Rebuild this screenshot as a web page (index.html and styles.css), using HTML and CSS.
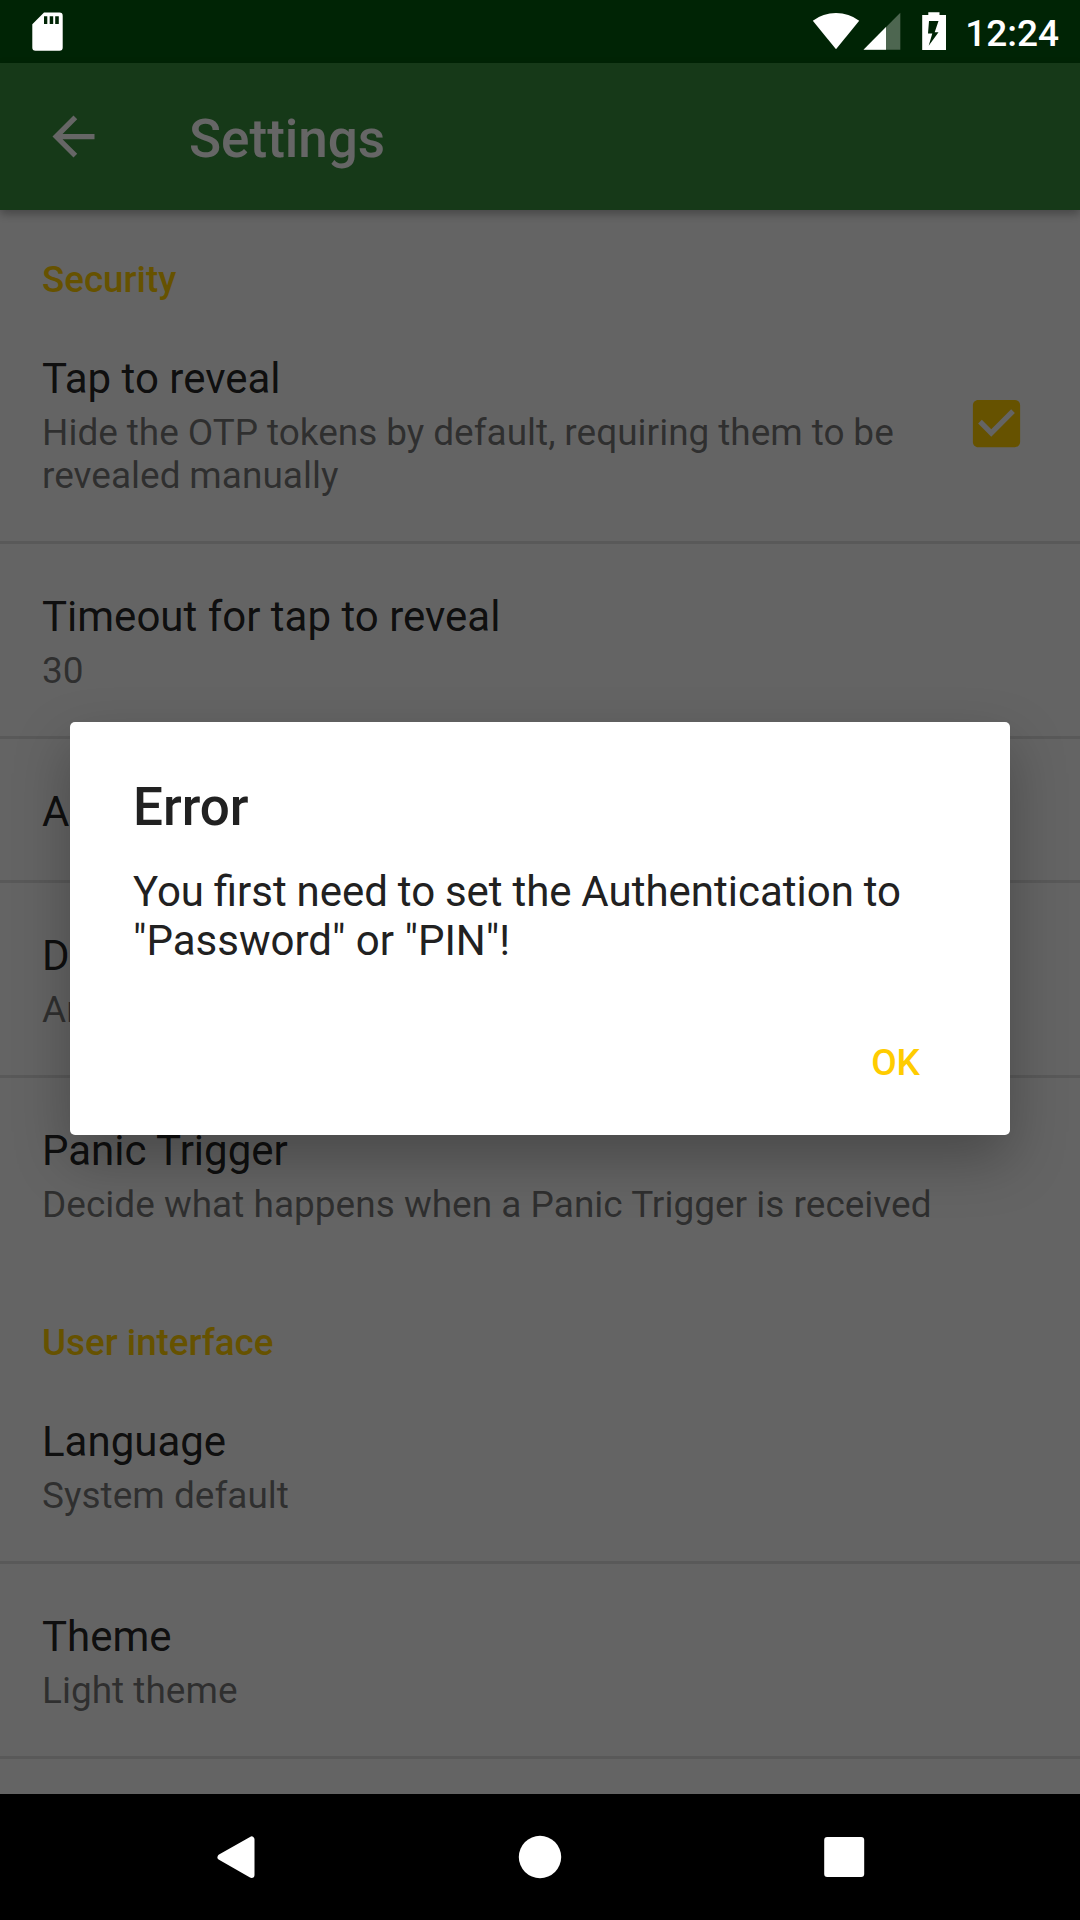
FILE: index.html
```html
<!DOCTYPE html>
<html lang="en">
<head>
<meta charset="utf-8">
<title>Settings</title>
<link rel="stylesheet" href="styles.css">
</head>
<body>
<div class="screen">
  <header class="status-bar">
    <svg class="icon-sd" width="31" height="39" viewBox="0 0 31 39"><path fill="#fff" fill-rule="evenodd" d="M12 .5H27.500Q30.700.5 30.700 3.700V35.500Q30.700 38.700 27.500 38.700H3.500Q.3 38.700.3 35.500V12.200ZM12 4.300V12H15.300V4.300ZM17.700 4.300V12H21.200V4.300ZM23.200 4.300V12H26.800V4.300Z"/></svg>
    <div class="status-right">
      <svg width="136" height="39" viewBox="812 12 136 39">
        <path fill="#fff" d="M812.800 20.700Q823 13 836 13T859.200 20.700L836 49.200Z"/>
        <path fill="#fff" fill-opacity=".3" d="M900.300 12.700V49.800H863.500Z"/>
        <path fill="#fff" d="M886 27.100V49.800H863.500Z"/>
        <path fill="#fff" fill-rule="evenodd" d="M928.300 12.300H939.500V15H946V50H922.200V15H928.300ZM929 21L928 33.500H932.300L928.700 45.700L938.500 32.300H934.700L938.500 21Z"/>
      </svg>
      <span class="clock">12:24</span>
    </div>
  </header>

  <div class="toolbar">
    <svg width="63" height="63" viewBox="0 0 24 24"><path fill="#fff" d="M20 11H7.830l5.590-5.590L12 4l-8 8 8 8 1.410-1.410L7.830 13H20v-2z"/></svg>
    <h1 class="toolbar-title">Settings</h1>
  </div>

  <main class="list">
    <h2 class="category">Security</h2>
    <div class="pref">
      <div class="pref-text">
        <div class="title">Tap to reveal</div>
        <div class="summary summary-tight">Hide the OTP tokens by default, requiring them to be revealed manually</div>
      </div>
      <svg class="checkbox" width="63" height="63" viewBox="0 0 24 24"><path fill="#fc0" d="M19 3H5c-1.110 0-2 .9-2 2v14c0 1.100.89 2 2 2h14c1.110 0 2-.9 2-2V5c0-1.100-.89-2-2-2zm-9 14l-5-5 1.410-1.410L10 14.170l7.590-7.590L19 8l-9 9z"/></svg>
    </div>
    <div class="pref">
      <div class="pref-text">
        <div class="title">Timeout for tap to reveal</div>
        <div class="summary">30</div>
      </div>
    </div>
    <div class="pref">
      <div class="pref-text"><div class="title">A</div></div>
    </div>
    <div class="pref">
      <div class="pref-text">
        <div class="title">D</div>
        <div class="summary">An</div>
      </div>
    </div>
    <div class="pref pref-last">
      <div class="pref-text">
        <div class="title">Panic Trigger</div>
        <div class="summary">Decide what happens when a Panic Trigger is received</div>
      </div>
    </div>
    <h2 class="category">User interface</h2>
    <div class="pref">
      <div class="pref-text">
        <div class="title">Language</div>
        <div class="summary">System default</div>
      </div>
    </div>
    <div class="pref">
      <div class="pref-text">
        <div class="title">Theme</div>
        <div class="summary">Light theme</div>
      </div>
    </div>
  </main>

  <nav class="nav-bar">
    <svg width="126" height="126" viewBox="0 0 126 126"><path fill="#fff" stroke="#fff" stroke-width="6" stroke-linejoin="round" d="M51.500 45.500V81L20.500 63.200Z"/></svg>
    <svg width="126" height="126" viewBox="0 0 126 126"><circle cx="63" cy="63" r="21.200" fill="#fff"/></svg>
    <svg width="126" height="126" viewBox="0 0 126 126"><rect x="76.200" y="43" width="40" height="40" rx="3" fill="#fff"/></svg>
  </nav>

  <div class="scrim">
    <section class="dialog">
      <h2 class="dialog-title">Error</h2>
      <p class="dialog-message">You first need to set the Authentication to "Password" or "PIN"!</p>
      <div class="dialog-actions"><button class="dialog-button">OK</button></div>
    </section>
  </div>
</div>
</body>
</html>
```

FILE: styles.css
```css
* {
  box-sizing: border-box;
  margin: 0;
  padding: 0;
}

body {
  font-family: Roboto, "Noto Sans", sans-serif;
  font-weight: 400;
  color: rgba(0, 0, 0, 0.87);
  background: #000;
}

svg {
  display: block;
  flex: none;
}

.screen {
  position: relative;
  display: flex;
  flex-direction: column;
  width: 1080px;
  height: 1920px;
  overflow: hidden;
}

.status-bar {
  display: flex;
  flex: none;
  justify-content: space-between;
  height: 63px;
  padding: 12px 21px 0 32px;
  background: #002405;
}

.status-right {
  display: flex;
  gap: 17px;
}

.clock {
  font-size: 37px;
  font-weight: 500;
  line-height: 43px;
  color: #fff;
}

.toolbar {
  z-index: 1;
  display: flex;
  flex: none;
  align-items: center;
  gap: 84px;
  height: 147px;
  padding-left: 42px;
  background: #388e3c;
  box-shadow: 0 4px 9px rgba(0, 0, 0, 0.3);
}

.toolbar-title {
  padding-top: 4px;
  font-size: 53px;
  font-weight: 500;
  line-height: 62px;
  color: #fff;
}

.list {
  flex: 1;
  min-height: 0;
  overflow: hidden;
  background: #fafafa;
}

.category {
  height: 96px;
  padding: 48px 42px 0;
  font-size: 36.75px;
  font-weight: 500;
  line-height: 43px;
  color: #fc0;
}

.pref {
  display: flex;
  align-items: center;
  gap: 42px;
  padding: 0 52.5px 0 42px;
  border-bottom: 3px solid #dedede;
}

.pref-last {
  border-bottom-color: transparent;
}

.pref-text {
  flex: 1;
  padding: 48px 0 44px;
}

.title {
  font-size: 42px;
  line-height: 49px;
}

.summary {
  margin-top: 8px;
  font-size: 37px;
  line-height: 43px;
  color: rgba(0, 0, 0, 0.54);
}

.summary-tight {
  word-spacing: -0.3px;
}

.nav-bar {
  display: flex;
  flex: none;
  justify-content: space-between;
  height: 126px;
  padding: 0 206px 0 200px;
  background: #000;
}

.nav-bar svg:nth-child(2) {
  margin-left: 6px;
}

.scrim {
  position: absolute;
  inset: 63px 0 126px;
  z-index: 2;
  padding: 659px 70px 0;
  background: rgba(0, 0, 0, 0.6);
}

.dialog {
  height: 413px;
  padding: 54px 63px 0;
  border-radius: 5px;
  color: #212121;
  background: #fff;
  box-shadow: 0 24px 56px rgba(0, 0, 0, 0.27);
}

.dialog-title {
  font-size: 53px;
  font-weight: 500;
  line-height: 62px;
}

.dialog-message {
  margin-top: 29px;
  font-size: 42px;
  line-height: 49px;
}

.dialog-message::first-line {
  word-spacing: -0.6px;
}

.dialog-actions {
  display: flex;
  justify-content: flex-end;
  margin-top: 76px;
  padding-right: 27px;
}

.dialog-button {
  border: 0;
  font: 500 37px/43px Roboto, "Noto Sans", sans-serif;
  color: #fc0;
  background: none;
}
```
